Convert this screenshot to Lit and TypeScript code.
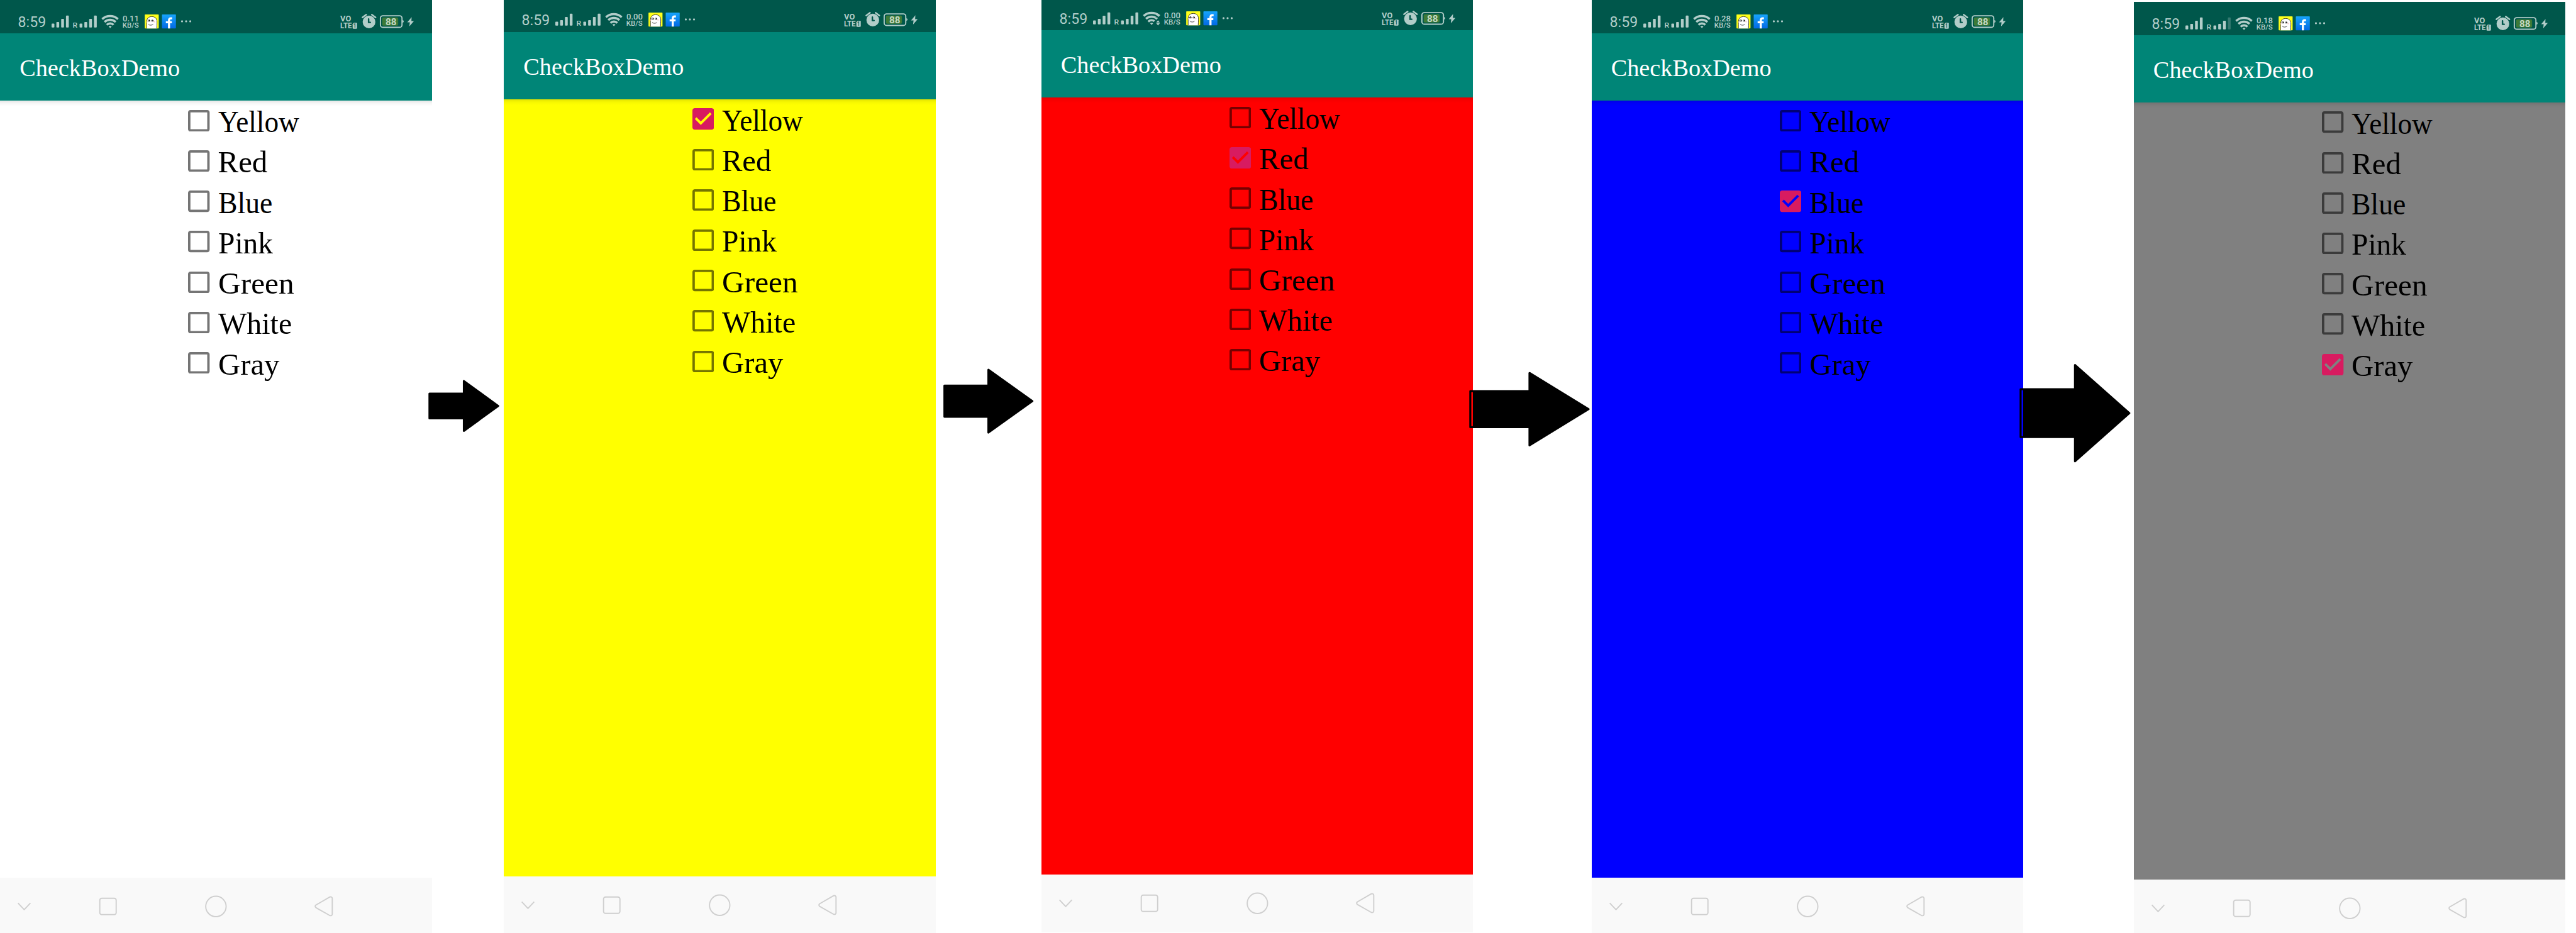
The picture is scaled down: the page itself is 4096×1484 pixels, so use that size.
import { LitElement, html, svg, css, unsafeCSS, nothing } from "lit";
import { customElement, property } from "lit/decorators.js";
import { styleMap } from "lit/directives/style-map.js";

// Design units to CSS pixels.
const K = 4096 / 6442;
const px = (n: number) => `${(n * K).toFixed(3)}px`;
const u = (n: number) => unsafeCSS(px(n));

interface Screen {
  top: number;
  color: string;
  checked: string;
  speed: string;
  weakSim?: boolean;
  traffic?: boolean;
}

interface Arrow {
  width: number;
  tail: number;
  neck: number;
  tip: number;
  mid: number;
  shaft: number;
  head: number;
  slot?: string;
}

// Label and its horizontal stretch.
const OPTIONS: [string, number][] = [
  ["Yellow", 0.925],
  ["Red", 1],
  ["Blue", 0.935],
  ["Pink", 0.97],
  ["Green", 1.01],
  ["White", 0.98],
  ["Gray", 0.995],
];

const SCREENS: Screen[] = [
  { top: 0, color: "#ffffff", checked: "", speed: "0.11" },
  { top: -4, color: "#ffff00", checked: "Yellow", speed: "0.00" },
  { top: -8, color: "#ff0000", checked: "Red", speed: "0.00", traffic: true },
  { top: 0, color: "#0000ff", checked: "Blue", speed: "0.28" },
  { top: 4, color: "#808080", checked: "Gray", speed: "0.18", weakSim: true },
];

const ARROWS: Arrow[] = [
  { width: 180, tail: -9, neck: 77, tip: 168, mid: 1015.5, shaft: 33.5, head: 65 },
  { width: 264, tail: 19, neck: 129, tip: 244, mid: 1003.5, shaft: 41.5, head: 81 },
  { width: 296, tail: -9, neck: 139, tip: 292, mid: 1023.5, shaft: 47.5, head: 93, slot: "#ff0000" },
  { width: 276, tail: -9, neck: 127, tip: 268, mid: 1033.5, shaft: 62.5, head: 123, slot: "#0000ff" },
];

@customElement("check-row")
class CheckRow extends LitElement {
  @property() label = "";
  @property({ type: Number }) stretch = 1;
  @property({ type: Boolean }) checked = false;

  static styles = css`
    :host {
      display: flex;
      align-items: flex-start;
      height: ${u(101)};
      padding-left: ${u(471)};
    }
    .box {
      display: block;
      width: ${u(54)};
      height: ${u(54)};
      margin: ${u(23)} ${u(20)} 0 0;
    }
    .off {
      fill: rgba(0, 0, 0, 0.54);
    }
    .on {
      fill: #d81b60;
    }
    .label {
      font: ${u(77)} / ${u(108)} "Liberation Serif", serif;
      color: #000;
      white-space: nowrap;
      transform-origin: 0 50%;
    }
  `;

  render() {
    return html`
      <svg class="box" viewBox="3 3 18 18">
        ${this.checked
          ? svg`<path class="on" d="M19 3H5c-1.11 0-2 .9-2 2v14c0 1.1.89 2 2 2h14c1.11 0 2-.9 2-2V5c0-1.1-.89-2-2-2zm-9 14l-5-5 1.41-1.41L10 14.17l7.59-7.59L19 8l-9 9z"/>`
          : svg`<path class="off" d="M19 5v14H5V5h14m0-2H5c-1.1 0-2 .9-2 2v14c0 1.1.9 2 2 2h14c1.1 0 2-.9 2-2V5c0-1.1-.9-2-2-2z"/>`}
      </svg>
      <span class="label" style=${styleMap({ transform: `scaleX(${this.stretch})` })}>${this.label}</span>
    `;
  }
}

@customElement("status-bar")
class StatusBar extends LitElement {
  @property() speed = "0.00";
  @property({ type: Boolean }) weakSim = false;
  @property({ type: Boolean }) traffic = false;

  static styles = css`
    :host {
      display: flex;
      justify-content: space-between;
      height: ${u(84)};
      background: #00574b;
    }
    svg {
      display: block;
      height: ${u(84)};
      fill: #b2cdc9;
      font-family: Roboto, sans-serif;
    }
    .left {
      width: ${u(500)};
    }
    .right {
      width: ${u(240)};
    }
    .arc {
      fill: none;
      stroke: #b2cdc9;
      stroke-width: 5.4;
    }
    .dim {
      opacity: 0.3;
    }
    .medium {
      font-weight: 500;
    }
    .bold {
      font-weight: 700;
    }
    .cut {
      fill: #00574b;
    }
    .line {
      fill: none;
      stroke: #b2cdc9;
      stroke-width: 3;
    }
    .ink {
      fill: none;
      stroke: #111;
      stroke-width: 1.2;
    }
  `;

  private bars(x: number, weak: boolean) {
    return [10, 14, 22, 30].map(
      (h, i) =>
        svg`<rect class=${weak && i === 3 ? "dim" : ""} x=${x + i * 12} y=${69 - h} width="7" height=${h} rx="1.6"/>`
    );
  }

  render() {
    return html`
      <svg class="left" viewBox="0 0 500 84">
        <defs>
          <linearGradient id="fb" x1="0" y1="0" x2="0" y2="1">
            <stop offset="0" stop-color="#17a4fb" />
            <stop offset="1" stop-color="#0369e4" />
          </linearGradient>
        </defs>
        <text x="45" y="68.3" font-size="36.6" textLength="70" lengthAdjust="spacingAndGlyphs">8:59</text>
        ${this.bars(129, false)}
        <text class="medium" x="181.6" y="69" font-size="17" textLength="12" lengthAdjust="spacingAndGlyphs">R</text>
        ${this.bars(199, this.weakSim)}
        <path class="arc" d="M255.5 47.8a29.5 29.5 0 0 1 39.5 0" />
        <path class="arc" d="M261.3 55a20.5 20.5 0 0 1 28 0" />
        <path class="arc" d=${this.traffic ? "M267 62a12 12 0 0 1 15.5 -1.2" : "M267 62a12.2 12.2 0 0 1 17 0"} />
        <path d="M271.6 66.2q3.9-2.6 7.8 0L275.5 70.4z" />
        ${this.traffic
          ? svg`<path class="cut" d="M286 50h12v23h-12z"/><path d="M291.5 58.5l4.5 5.5h-9zM291.5 71.5l4.5-5.5h-9z"/><path class="arc" d="M286.3 52.6l3.2 2.6M287 42.8a29.5 29.5 0 0 1 8 5"/>`
          : nothing}
        <text class="medium" x="306.6" y="53" font-size="20.6" textLength="41" lengthAdjust="spacingAndGlyphs">${this.speed}</text>
        <text class="medium" x="306.4" y="69" font-size="17.6" textLength="41" lengthAdjust="spacingAndGlyphs">KB/S</text>

        <rect x="362" y="36" width="35" height="35" rx="1.5" fill="#ffff1a" />
        <path d="M366.8 71V60q-.6-7 1.2-11.500Q370.500 41.500 380 41.500q10 .2 12.400 9.500.600 2.500 0 20z" fill="#fff" />
        <path class="ink" d="M366.800 71V60q-.6-7 1.200-11.500Q370.500 41.500 380 41.500q10 .2 12.400 9.500.6 2.500-.4 20" />
        <path class="ink" d="M369 53q1.500-4 5.500-3.500M378 52q1.500-3.500 5-1.500M370 53h5M378.500 53h5.500M371 60.500q1.500 2.500 6 2.500t6-2.500" />
        <path d="M372.500 50.500h2.500v2.500h-2.500zM381 50.500h2.500v2.500h-2.500z" fill="#111" />
        <path d="M384.500 53h3v3h-3zM366.900 53.500h1.500v3h-1.500z" fill="#ffc4c4" />

        <rect x="405" y="36" width="35" height="35" rx="1.500" fill="url(#fb)" />
        <path d="M422.700 71V50.500q0-4.800 4.800-4.800h3M414.800 55.700h15" fill="none" stroke="#fff" stroke-width="5.200" />

        <circle cx="455.300" cy="53.300" r="2.500" />
        <circle cx="465.500" cy="53.300" r="2.500" />
        <circle cx="475.800" cy="53.300" r="2.500" />
      </svg>
      <svg class="right" viewBox="840 0 240 84">
        <text class="bold" x="851.2" y="53" font-size="20.6" textLength="27" lengthAdjust="spacingAndGlyphs">VO</text>
        <text class="bold" x="851.2" y="71.400" font-size="21" textLength="29" lengthAdjust="spacingAndGlyphs">LTE</text>
        <path d="M885 57h6.500q1.500 0 1.500 1.500v12q0 1.300-1.500 1.300h-8q-1.500 0-1.500-1.300V60z" />
        <text class="cut bold" x="884.2" y="69.200" font-size="13.500" textLength="6.500" lengthAdjust="spacingAndGlyphs">1</text>

        <circle cx="923" cy="55" r="15.900" />
        <path d="M906.500 43.500l9.500-7M939.500 43.500l-9.500-7" fill="none" stroke="#b2cdc9" stroke-width="3.800" stroke-linecap="round" />
        <path d="M922 47.500v8.500h4.200" fill="none" stroke="#00574b" stroke-width="3.800" stroke-linecap="round" />

        <rect class="line" x="951.500" y="39.500" width="54" height="29" rx="6" />
        <path d="M1007 50.500q3 .5 3 3t-3 3.500z" />
        <rect x="956" y="43.700" width="40" height="20.300" rx="3" fill="#3d7a37" />
        <text class="bold" x="964.2" y="63" font-size="24" textLength="27.500" lengthAdjust="spacingAndGlyphs" fill="#c5d8c4">88</text>
        <path d="M1029.500 43l-10.800 13h6.300l-1.200 10 11.500-13.500h-6.300z" />
      </svg>
    `;
  }
}

@customElement("phone-screen")
class PhoneScreen extends LitElement {
  @property({ attribute: false }) screen!: Screen;

  static styles = css`
    :host {
      display: flex;
      flex-direction: column;
      flex: none;
      width: ${u(1080)};
      height: ${u(2340)};
    }
    .app-bar {
      display: flex;
      height: ${u(168)};
      padding-left: ${u(49)};
      background: #008577;
      color: #fff;
      font: ${u(60.2)} / ${u(174)} "Liberation Serif", serif;
      white-space: nowrap;
    }
    .body {
      flex: 1;
    }
    .shade {
      height: ${u(14)};
      margin-bottom: ${u(-14)};
      background: linear-gradient(rgba(0, 0, 0, 0.1), rgba(0, 0, 0, 0.03) 50%, transparent);
    }
    .nav {
      display: block;
      flex: none;
      width: 100%;
      height: ${u(144)};
      background: #f9f9f9;
      fill: none;
      stroke: #cfcfcf;
      stroke-width: 3;
      stroke-linejoin: round;
    }
  `;

  render() {
    const s = this.screen;
    return html`
      <status-bar .speed=${s.speed} .weakSim=${!!s.weakSim} .traffic=${!!s.traffic}></status-bar>
      <div class="app-bar">CheckBoxDemo</div>
      <div class="body" style=${styleMap({ background: s.color })}>
        <div class="shade"></div>
        ${OPTIONS.map(
          ([label, stretch]) =>
            html`<check-row .label=${label} .stretch=${stretch} .checked=${s.checked === label}></check-row>`
        )}
      </div>
      <svg class="nav" viewBox="0 0 1080 144">
        <path d="M45 63.500l15.500 16.500 15.500-16.500" />
        <rect x="249.500" y="51.500" width="41" height="41" rx="5" />
        <circle cx="540" cy="72" r="25.500" />
        <path d="M825 48.200L790 68.500q-3.500 3 0 6.500L825 94.800q6 1 6-4V52.200q0-5-6-4z" />
      </svg>
    `;
  }
}

@customElement("app-root")
class AppRoot extends LitElement {
  static styles = css`
    :host {
      display: flex;
      align-items: flex-start;
      width: 4096px;
      height: 1484px;
      overflow: hidden;
      background: #fff;
    }
    .step {
      display: block;
      flex: none;
      height: ${u(2334)};
      position: relative;
      overflow: visible;
    }
  `;

  private arrow(a: Arrow) {
    const h = 2.5;
    const l = a.tail + h;
    const n = a.neck + h;
    const s = a.shaft - h;
    const e = a.head - h;
    const d = `M${l} ${a.mid - s}H${n}V${a.mid - e}L${a.tip - h} ${a.mid}L${n} ${a.mid + e}V${a.mid + s}H${l}Z`;
    return html`
      <svg class="step" viewBox="0 0 ${a.width} 2334" style=${styleMap({ width: px(a.width) })}>
        <path d=${d} stroke="#000" stroke-width="5" stroke-linejoin="round" />
        ${a.slot
          ? svg`<rect x=${l + h} y=${a.mid - s + h} width=${-l - h} height=${2 * (s - h)} fill=${a.slot}/>`
          : nothing}
      </svg>
    `;
  }

  render() {
    return SCREENS.map(
      (s, i) => html`
        <phone-screen .screen=${s} style=${styleMap({ marginTop: px(s.top) })}></phone-screen>
        ${ARROWS[i] ? this.arrow(ARROWS[i]) : nothing}
      `
    );
  }
}
